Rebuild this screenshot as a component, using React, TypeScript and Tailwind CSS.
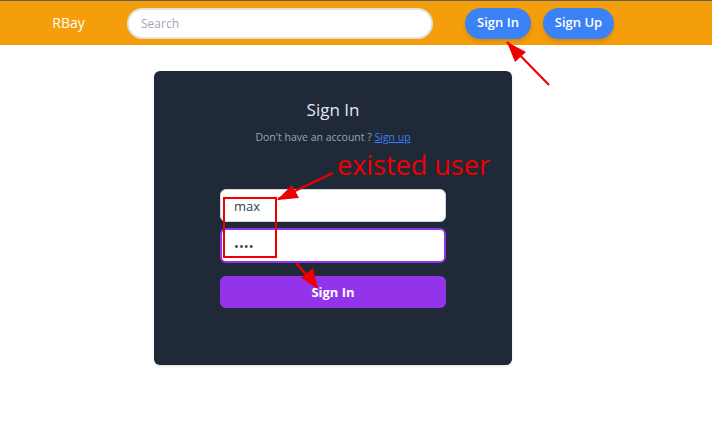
export default function App() {
  return (
    <div className="relative w-[712px] h-[424px] bg-white overflow-hidden" style={{ fontFamily: '"Open Sans", "Noto Sans", sans-serif' }}>
      <div className="h-px bg-[#5f5f5f]" />
      <nav className="h-[44px] bg-[#f59e0b] flex items-center">
        <div className="w-[127px] pl-[10px] text-center text-white text-sm pb-px">RBay</div>
        <input
          className="w-[306px] h-[31px] rounded-full bg-white border-2 border-[#e2e2e2] px-3 text-xs text-gray-700 placeholder:text-[#a0a8b5] outline-none"
          placeholder="Search"
        />
        <button className="ml-[32px] w-[66px] h-[31px] rounded-full bg-[#3b82f6] text-white text-[13px] font-semibold shadow-md">Sign In</button>
        <button className="ml-[12px] w-[71px] h-[31px] rounded-full bg-[#3b82f6] text-white text-[13px] font-semibold shadow-md">Sign Up</button>
      </nav>

      <div className="flex justify-center pt-[26px] pr-[46px]">
        <div className="w-[358px] h-[294px] bg-[#1f2937] rounded-md shadow flex flex-col items-center">
          <h2 className="mt-[26px] text-[17px] text-[#e5e7eb]">Sign In</h2>
          <p className="mt-[7px] text-[10.5px] text-[#9ca3af]">
            Don't have an account ? <a className="text-[#3b82f6] underline" href="#">Sign up</a>
          </p>
          <div className="mt-[44px] w-[226px] flex flex-col gap-[6px]">
            <input
              className="h-[33px] rounded-md bg-white border border-gray-300 px-[13px] text-[13px] text-gray-700 outline-none"
              defaultValue="max"
            />
            <input
              type="password"
              className="h-[35px] rounded-md bg-white border-2 border-[#9333ea] px-[12px] text-[13px] text-gray-700 outline-none"
              defaultValue="1234"
            />
            <button className="mt-[7px] h-[32px] rounded-md bg-[#9333ea] text-white text-[13px] font-bold">Sign In</button>
          </div>
        </div>
      </div>

      {/* annotations */}
      <div className="absolute left-[337px] top-[151px] text-[27px] leading-none text-[#ee0000]">existed user</div>
      <div className="absolute left-[223px] top-[197px] w-[54px] h-[61px] border-2 border-[#ee0000]" />
      <svg className="absolute left-0 top-0 pointer-events-none" width="712" height="424">
        <line x1="549" y1="85" x2="507" y2="42" stroke="#ee0000" strokeWidth="2.2" />
        <polygon points="507,42 526,52 515,62" fill="#ee0000" />
        <line x1="333" y1="173" x2="278" y2="199" stroke="#ee0000" strokeWidth="2.2" />
        <polygon points="277,200 292,185 299,198" fill="#ee0000" />
        <line x1="296" y1="263" x2="317" y2="287" stroke="#ee0000" strokeWidth="2.2" />
        <polygon points="318,289 301,278 313,268" fill="#ee0000" />
      </svg>
    </div>
  );
}
